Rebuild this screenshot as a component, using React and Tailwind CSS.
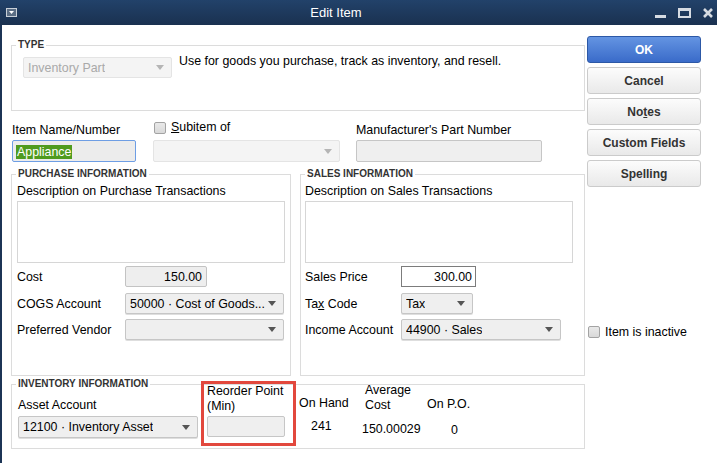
import React from "react";

function Arrow({ color = "#555" }) {
    return (
        <svg width="8" height="5" viewBox="0 0 8 5" className="shrink-0">
            <path d="M0 0 H8 L4 5 Z" fill={color} />
        </svg>
    );
}

function Select({ value, className, disabled }) {
    return (
        <div
            className={
                "flex items-center justify-between h-[21px] rounded-[2px] border pl-[4px] pr-[7px] " +
                (disabled
                    ? "bg-[#f4f4f4] border-[#e4e4e4] text-[#a9a9a9]"
                    : "bg-[#efefef] border-[#c6c6c6] text-black shadow-[0_1px_0_#dedede]") +
                " " +
                className
            }
        >
            <span className="truncate">{value}</span>
            <Arrow color={disabled ? "#b5b5b5" : "#555"} />
        </div>
    );
}

function Box({ legend, className, children }) {
    return (
        <div className={"relative border border-[#dcdcdc] " + className}>
            <span className="absolute -top-[8px] left-[4px] bg-white px-[2px] text-[10px] leading-[14px] font-bold text-[#333]">
                {legend}
            </span>
            {children}
        </div>
    );
}

function Checkbox() {
    return <div className="w-[12px] h-[12px] rounded-[2px] border border-[#a3a3a3] bg-gradient-to-b from-[#e9e9e9] to-[#d9d9d9]" />;
}

function Button({ children, primary }) {
    return (
        <div
            className={
                "flex items-center justify-center h-[27px] w-[114px] rounded-[3px] border text-[12px] font-bold " +
                (primary
                    ? "bg-gradient-to-b from-[#6494e2] to-[#3a6bc9] border-[#2c58a6] text-white"
                    : "bg-gradient-to-b from-[#fcfcfc] to-[#e9e9e9] border-[#cbcbcb] text-[#333]")
            }
        >
            {children}
        </div>
    );
}

function Row({ label, labelW, children, className }) {
    return (
        <div className={"flex items-center h-[21px] " + className}>
            <div className={labelW}>{label}</div>
            {children}
        </div>
    );
}

export default function App() {
    return (
        <div className="w-[717px] h-[463px] overflow-hidden bg-white font-['Liberation_Sans',Arial,sans-serif] text-[12.4px] leading-[14px] text-black">
            {/* title bar */}
            <div className="flex items-center h-[25px] bg-gradient-to-b from-[#22426a] to-[#1a3150] text-white">
                <div className="ml-[6px] flex items-center justify-center w-[11px] h-[9px] border border-[#c9d0d8] bg-[#5a6d84]">
                    <svg width="5" height="3" viewBox="0 0 5 3">
                        <path d="M0 0 H5 L2.5 3 Z" fill="#fff" />
                    </svg>
                </div>
                <div className="w-[645px] text-center text-[13px]">Edit Item</div>
                <div className="ml-auto flex items-center">
                    <div className="w-[11px] h-[3px] bg-[#d6dbe2] mt-[7px]" />
                    <div className="ml-[12px] w-[13px] h-[10px] border-2 border-t-[3px] border-[#d6dbe2]" />
                    <svg width="10" height="10" viewBox="0 0 10 10" className="ml-[12px] mr-[4px]">
                        <path d="M1 1 L9 9 M9 1 L1 9" stroke="#d6dbe2" strokeWidth="2.6" />
                    </svg>
                </div>
            </div>

            <div className="flex h-[438px] border-l-2 border-[#1c3455]">
                {/* main column */}
                <div className="w-[583px] pl-[9px] pt-[20px]">
                    <Box legend="TYPE" className="w-[574px] h-[66px]">
                        <div className="flex items-start">
                            <Select value="Inventory Part" disabled className="ml-[11px] mt-[11px] w-[149px]" />
                            <div className="ml-[7px] mt-[8px]">Use for goods you purchase, track as inventory, and resell.</div>
                        </div>
                    </Box>

                    <div className="flex mt-[11px]">
                        <div className="ml-[1px] w-[124px]">
                            <div className="h-[18px] pt-[1px]">Item Name/Number</div>
                            <div className="h-[22px] rounded-[2px] border border-[#6e9ee4] bg-[#ececec] pl-[3px] pt-[4px]">
                                <span className="bg-[#4f9b1e] text-white px-[1px]">Appliance</span>
                            </div>
                        </div>
                        <div className="ml-[17px] w-[187px]">
                            <div className="h-[18px] flex items-start">
                                <div className="ml-[1px]">
                                    <Checkbox />
                                </div>
                                <span className="ml-[5px] -mt-[2px]">
                                    <u>S</u>ubitem of
                                </span>
                            </div>
                            <Select value="" disabled className="h-[22px]" />
                        </div>
                        <div className="ml-[16px] w-[186px]">
                            <div className="h-[18px] pt-[1px]">Manufacturer's Part Number</div>
                            <div className="h-[22px] rounded-[2px] border border-[#c6c6c6] bg-[#efefef]" />
                        </div>
                    </div>

                    <div className="flex mt-[12px]">
                        <Box legend="PURCHASE INFORMATION" className="w-[280px] h-[202px] pl-[5px]">
                            <div className="mt-[9px]">Description on Purchase Transactions</div>
                            <div className="mt-[3px] w-[268px] h-[62px] border border-[#d6d6d6]" />
                            <Row label="Cost" labelW="w-[108px]" className="mt-[3px]">
                                <div className="w-[82px] h-[21px] rounded-[2px] border border-[#c3c3c3] bg-[#eeeeee] text-right pr-[4px] pt-[3px]">
                                    150.00
                                </div>
                            </Row>
                            <Row label="COGS Account" labelW="w-[108px]" className="mt-[6px]">
                                <Select value="50000 · Cost of Goods..." className="w-[159px]" />
                            </Row>
                            <Row label="Preferred Vendor" labelW="w-[108px]" className="mt-[5px]">
                                <Select value="" className="w-[159px]" />
                            </Row>
                        </Box>
                        <Box legend="SALES INFORMATION" className="ml-[9px] w-[285px] h-[202px] pl-[4px]">
                            <div className="mt-[9px]">Description on Sales Transactions</div>
                            <div className="mt-[3px] w-[268px] h-[62px] border border-[#d6d6d6]" />
                            <Row label="Sales Price" labelW="w-[96px]" className="mt-[3px]">
                                <div className="w-[75px] h-[21px] border border-[#7c7c7c] bg-white text-right pr-[3px] pt-[3px]">
                                    300.00
                                </div>
                            </Row>
                            <Row
                                label={
                                    <span>
                                        Ta<u>x</u> Code
                                    </span>
                                }
                                labelW="w-[96px]"
                                className="mt-[6px]"
                            >
                                <Select value="Tax" className="w-[72px]" />
                            </Row>
                            <Row label="Income Account" labelW="w-[96px]" className="mt-[5px]">
                                <Select value="44900 · Sales" className="w-[160px]" />
                            </Row>
                        </Box>
                    </div>

                    <Box legend="INVENTORY INFORMATION" className="mt-[8px] w-[574px] h-[65px]">
                        <div className="flex items-start">
                            <div className="ml-[6px] mt-[13px] w-[180px]">
                                <div>Asset Account</div>
                                <Select value="12100 · Inventory Asset" className="mt-[4px] h-[22px]" />
                            </div>
                            <div className="ml-[3px] -mt-[4px] w-[95px] h-[65px] border-[3px] border-[#e2483d] pl-[3px] leading-[15px]">
                                <div>Reorder Point</div>
                                <div>(Min)</div>
                                <div className="mt-[2px] w-[78px] h-[21px] rounded-[2px] border border-[#c6c6c6] bg-[#efefef]" />
                            </div>
                            <div className="ml-[3px] w-[63px] mt-[11px]">
                                <div>On Hand</div>
                                <div className="mt-[9px] pl-[12px]">241</div>
                            </div>
                            <div className="w-[65px] -mt-[2px] leading-[15px]">
                                <div className="pl-[3px]">Average</div>
                                <div className="pl-[3px]">Cost</div>
                                <div className="mt-[9px] leading-[14px]">150.00029</div>
                            </div>
                            <div className="mt-[12px]">
                                <div>On P.O.</div>
                                <div className="mt-[12px] pl-[24px]">0</div>
                            </div>
                        </div>
                    </Box>
                </div>

                {/* right column */}
                <div className="ml-[2px] pt-[11px] flex flex-col">
                    <div className="flex flex-col gap-[4px]">
                        <Button primary>OK</Button>
                        <Button>Cancel</Button>
                        <Button>
                            <span>
                                No<u>t</u>es
                            </span>
                        </Button>
                        <Button>Custom Fields</Button>
                        <Button>
                            <span>
                                Spellin<u>g</u>
                            </span>
                        </Button>
                    </div>
                    <div className="mt-[138px] flex items-center">
                        <div className="ml-[1px]">
                            <Checkbox />
                        </div>
                        <span className="ml-[5px]">Item is inactive</span>
                    </div>
                </div>
            </div>
        </div>
    );
}
